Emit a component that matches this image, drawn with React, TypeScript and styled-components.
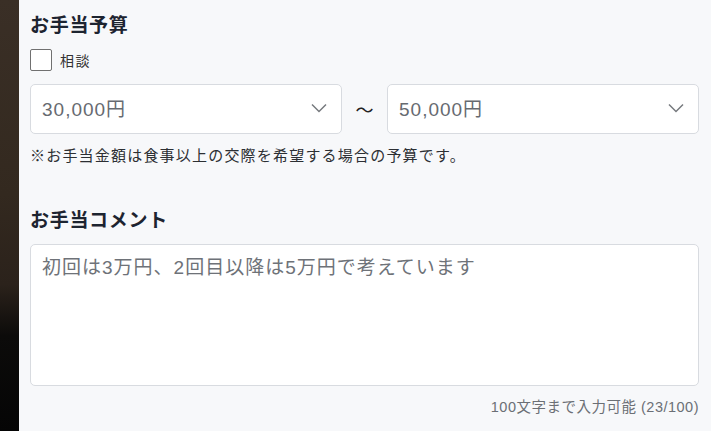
import React from "react";
import styled, { createGlobalStyle } from "styled-components";

const GlobalStyle = createGlobalStyle`
  html, body {
    margin: 0;
    padding: 0;
    background: #f7f8fa;
  }
  body {
    font-family: "Liberation Sans", "Noto Sans CJK JP", sans-serif;
  }
  * {
    box-sizing: border-box;
  }
`;

const Page = styled.div`
  display: flex;
  width: 711px;
  height: 431px;
  overflow: hidden;
`;

const Backdrop = styled.div`
  width: 19px;
  flex-shrink: 0;
  background: linear-gradient(
    180deg,
    #3a2f26 0%,
    #33291f 45%,
    #2b221b 66%,
    #0c0b0a 78%,
    #050505 100%
  );
`;

const Panel = styled.div`
  flex: 1;
  background: #f7f8fa;
  padding: 12px 12px 0 11px;
  display: flex;
  flex-direction: column;
`;

const Heading = styled.h2<{ $gap?: number }>`
  margin: ${(p) => p.$gap ?? 0}px 0 0 0;
  font-size: 19px;
  line-height: 28px;
  font-weight: 700;
  letter-spacing: 0.7px;
  color: #1d2430;
`;

const CheckRow = styled.label`
  margin-top: 9px;
  display: flex;
  align-items: center;
  gap: 8px;
  height: 22px;
  font-size: 14px;
  letter-spacing: 0.1em;
  color: #333;
  cursor: pointer;
`;

const Box = styled.span`
  width: 22px;
  height: 22px;
  background: #fff;
  border: 1.5px solid #707070;
  border-radius: 2px;
`;

const RangeRow = styled.div`
  margin-top: 13px;
  display: grid;
  grid-template-columns: 1fr 45px 1fr;
  align-items: center;
`;

const Tilde = styled.span`
  text-align: center;
  font-size: 18px;
  color: #222;
`;

const SelectWrap = styled.div`
  position: relative;
  height: 50px;
`;

const Select = styled.select`
  appearance: none;
  width: 100%;
  height: 100%;
  padding: 0 40px 0 11px;
  background: #fff;
  border: 1px solid #d8dbe0;
  border-radius: 5px;
  font-family: inherit;
  font-size: 19px;
  letter-spacing: 1px;
  color: #666a70;
  outline: none;
`;

const Chevron = styled.svg`
  position: absolute;
  right: 15px;
  top: 19px;
  pointer-events: none;
`;

const Note = styled.p`
  margin: 11px 0 0 0;
  font-size: 15px;
  line-height: 22px;
  letter-spacing: 1.2px;
  color: #2c2f33;
`;

const CommentBox = styled.textarea`
  margin-top: 9px;
  width: 100%;
  height: 142px;
  resize: none;
  background: #fff;
  border: 1px solid #d8dbe0;
  border-radius: 5px;
  padding: 10px 11px;
  font-family: inherit;
  font-size: 19px;
  line-height: 26px;
  letter-spacing: 1px;
  color: #333;
  outline: none;
  &::placeholder {
    color: #6e7278;
  }
`;

const Counter = styled.div`
  margin-top: 11px;
  text-align: right;
  font-size: 14.5px;
  line-height: 20px;
  letter-spacing: 0.5px;
  color: #6b6f75;
`;

const ChevronIcon = () => (
  <Chevron width="16" height="10" viewBox="0 0 16 10" fill="none">
    <path d="M1 1.5 L8 8.5 L15 1.5" stroke="#76797e" strokeWidth="1.5" />
  </Chevron>
);

const amounts = ["10,000円", "20,000円", "30,000円", "40,000円", "50,000円", "100,000円"];

const App = (): JSX.Element => {
  const [min, setMin] = React.useState("30,000円");
  const [max, setMax] = React.useState("50,000円");
  const [comment, setComment] = React.useState("");

  return (
    <React.Fragment>
      <GlobalStyle />
      <Page>
        <Backdrop />
        <Panel>
          <Heading>お手当予算</Heading>
          <CheckRow>
            <Box />
            相談
          </CheckRow>
          <RangeRow>
            <SelectWrap>
              <Select value={min} onChange={(e) => setMin(e.target.value)}>
                {amounts.map((a) => (
                  <option key={a}>{a}</option>
                ))}
              </Select>
              <ChevronIcon />
            </SelectWrap>
            <Tilde>〜</Tilde>
            <SelectWrap>
              <Select value={max} onChange={(e) => setMax(e.target.value)}>
                {amounts.map((a) => (
                  <option key={a}>{a}</option>
                ))}
              </Select>
              <ChevronIcon />
            </SelectWrap>
          </RangeRow>
          <Note>※お手当金額は食事以上の交際を希望する場合の予算です。</Note>
          <Heading $gap={40}>お手当コメント</Heading>
          <CommentBox
            value={comment}
            onChange={(e) => setComment(e.target.value)}
            placeholder="初回は3万円、2回目以降は5万円で考えています"
            maxLength={100}
          />
          <Counter>100文字まで入力可能 (23/100)</Counter>
        </Panel>
      </Page>
    </React.Fragment>
  );
};

export default App;
